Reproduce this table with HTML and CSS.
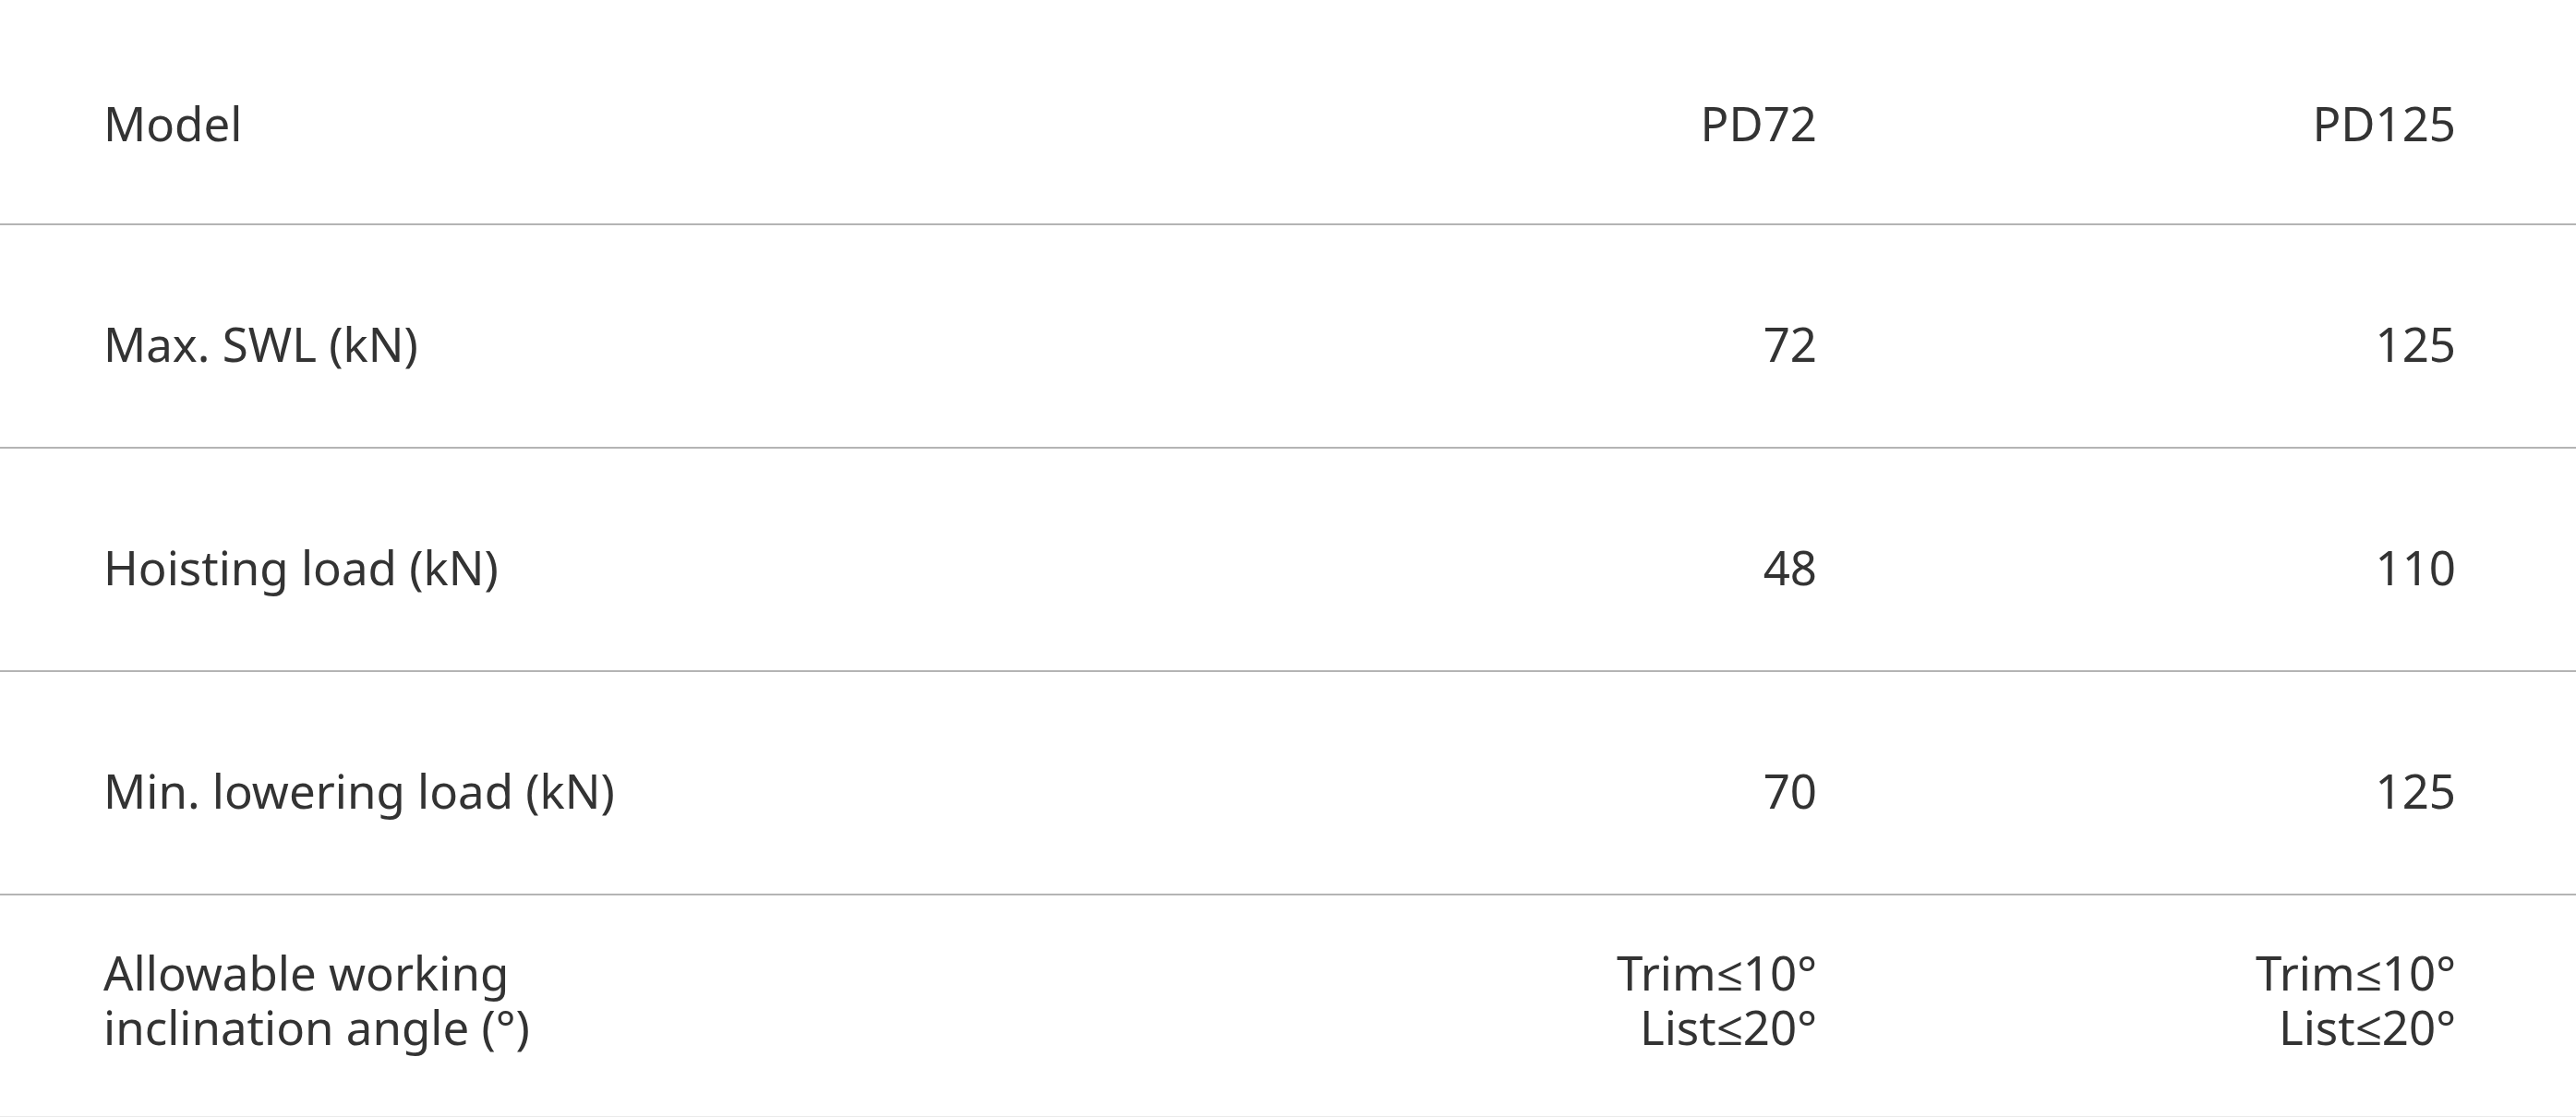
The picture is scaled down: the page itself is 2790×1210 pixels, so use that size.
FILE: index.html
```html
<!DOCTYPE html>
<html lang="en">
<head>
    <meta charset="UTF-8">
    <meta name="viewport" content="width=device-width, initial-scale=1.0">
    <title>Specifications</title>
    <link rel="stylesheet" href="styles.css">
</head>
<body>
    <div class="spec-table">
        <div class="spec-row spec-head">
            <div class="spec-label">Model</div>
            <div class="spec-value">PD72</div>
            <div class="spec-value">PD125</div>
        </div>
        <div class="spec-row">
            <div class="spec-label">Max. SWL (kN)</div>
            <div class="spec-value">72</div>
            <div class="spec-value">125</div>
        </div>
        <div class="spec-row">
            <div class="spec-label">Hoisting load (kN)</div>
            <div class="spec-value">48</div>
            <div class="spec-value">110</div>
        </div>
        <div class="spec-row">
            <div class="spec-label">Min. lowering load (kN)</div>
            <div class="spec-value">70</div>
            <div class="spec-value">125</div>
        </div>
        <div class="spec-row spec-last">
            <div class="spec-label">Allowable working<br>inclination angle (°)</div>
            <div class="spec-value">Trim≤10°<br>List≤20°</div>
            <div class="spec-value">Trim≤10°<br>List≤20°</div>
        </div>
    </div>
</body>
</html>
```

FILE: styles.css
```css
body {
    margin: 0;
    padding: 0;
    background-color: #fff;
    font-family: "Noto Sans", "Open Sans", sans-serif;
    color: #333;
}
.spec-table {
    width: 100%;
}
.spec-row {
    display: grid;
    grid-template-columns: 1fr 692px 692px;
    padding: 99px 130px 82px 112px;
    border-bottom: 2px solid #b4b4b4;
    font-size: 51px;
    line-height: 59px;
}
.spec-head {
    padding-top: 104px;
    padding-bottom: 79px;
}
.spec-last {
    padding-top: 54px;
    padding-bottom: 67px;
    border-bottom: 1px solid #ebebeb;
}
.spec-value {
    text-align: right;
}
```
